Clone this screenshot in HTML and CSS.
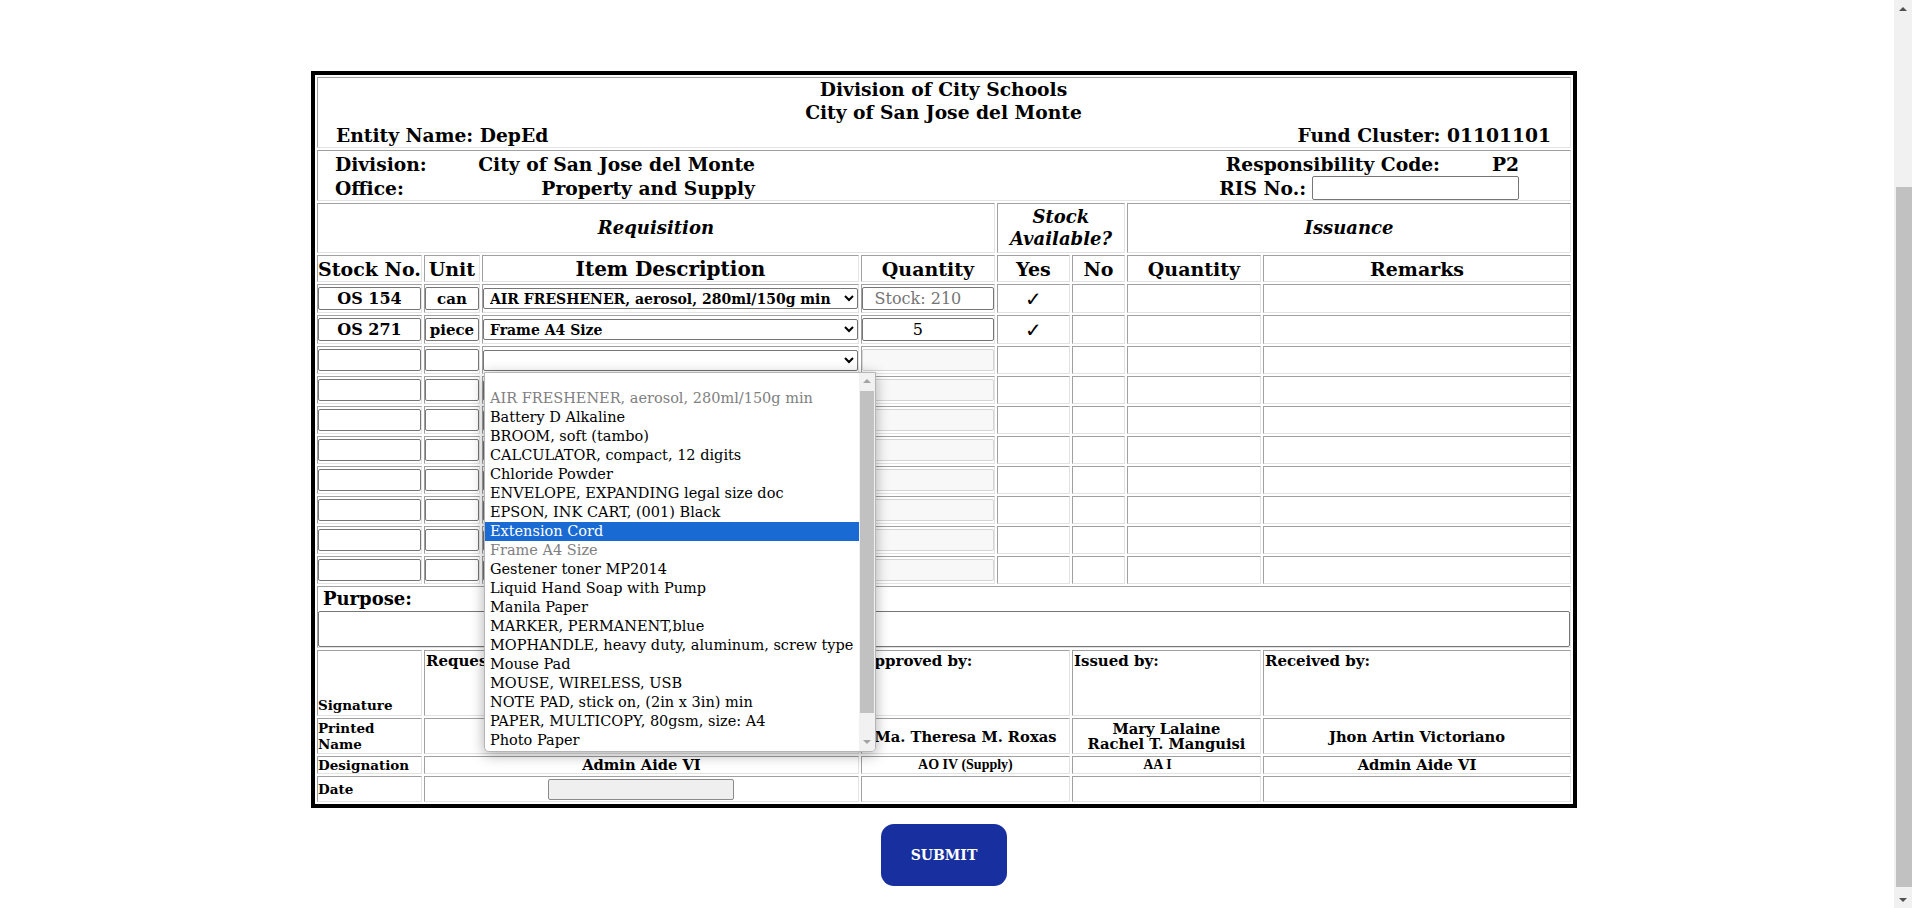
FILE: index.html
```html
<!DOCTYPE html>
<html>
<head>
<meta charset="utf-8">
<title>Requisition and Issue Slip</title>
<link rel="stylesheet" href="styles.css">
</head>
<body>
<div class="page">
  <table class="ris">
    <colgroup>
      <col class="c-stock"><col class="c-unit"><col class="c-item"><col class="c-qty">
      <col class="c-yes"><col class="c-no"><col class="c-iqty"><col class="c-rem">
    </colgroup>
    <tr class="r-a">
      <td colspan="8" class="head-a">
        <div class="title">Division of City Schools</div>
        <div class="title">City of San Jose del Monte</div>
        <div class="entity-line"><span>Entity Name: DepEd</span><span>Fund Cluster: 01101101</span></div>
      </td>
    </tr>
    <tr class="r-b">
      <td colspan="8" class="head-b">
        <div class="left-block">
          <div class="kv"><span class="k">Division:</span><span class="v">City of San Jose del Monte</span></div>
          <div class="kv"><span class="k">Office:</span><span class="v">Property and Supply</span></div>
        </div>
        <div class="right-block">
          <div class="rline">Responsibility Code:<span class="p2">P2</span></div>
          <div class="rline">RIS No.:<input class="ris-no" type="text"></div>
        </div>
      </td>
    </tr>
    <tr class="r-c">
      <td colspan="4" class="sec">Requisition</td>
      <td colspan="2" class="sec">Stock<br>Available?</td>
      <td colspan="2" class="sec">Issuance</td>
    </tr>
    <tr class="r-d">
      <td class="th">Stock No.</td>
      <td class="th">Unit</td>
      <td class="th th-item">Item Description</td>
      <td class="th">Quantity</td>
      <td class="th">Yes</td>
      <td class="th">No</td>
      <td class="th">Quantity</td>
      <td class="th">Remarks</td>
    </tr>
    <tr class="dr tall">
      <td><input class="in-stock" type="text" value="OS 154"></td>
      <td><input class="in-unit" type="text" value="can"></td>
      <td><select class="sel"><option>AIR FRESHENER, aerosol, 280ml/150g min</option></select></td>
      <td><input class="in-qty" type="text" placeholder="Stock: 210"></td>
      <td class="chk">✓</td><td></td><td></td><td></td>
    </tr>
    <tr class="dr tall">
      <td><input class="in-stock" type="text" value="OS 271"></td>
      <td><input class="in-unit" type="text" value="piece"></td>
      <td><select class="sel"><option>Frame A4 Size</option></select></td>
      <td><input class="in-qty" type="text" value="5"></td>
      <td class="chk">✓</td><td></td><td></td><td></td>
    </tr>
    <tr class="dr">
      <td><input class="in-stock" type="text"></td>
      <td><input class="in-unit" type="text"></td>
      <td>
        <div class="dd-anchor">
          <select class="sel"><option></option></select>
          <div class="dd">
            <div class="dd-list">
              <div class="opt blank"></div>
              <div class="opt dis">AIR FRESHENER, aerosol, 280ml/150g min</div>
              <div class="opt">Battery D Alkaline</div>
              <div class="opt">BROOM, soft (tambo)</div>
              <div class="opt">CALCULATOR, compact, 12 digits</div>
              <div class="opt">Chloride Powder</div>
              <div class="opt">ENVELOPE, EXPANDING legal size doc</div>
              <div class="opt">EPSON, INK CART, (001) Black</div>
              <div class="opt hi">Extension Cord</div>
              <div class="opt dis">Frame A4 Size</div>
              <div class="opt">Gestener toner MP2014</div>
              <div class="opt">Liquid Hand Soap with Pump</div>
              <div class="opt">Manila Paper</div>
              <div class="opt">MARKER, PERMANENT,blue</div>
              <div class="opt">MOPHANDLE, heavy duty, aluminum, screw type</div>
              <div class="opt">Mouse Pad</div>
              <div class="opt">MOUSE, WIRELESS, USB</div>
              <div class="opt">NOTE PAD, stick on, (2in x 3in) min</div>
              <div class="opt">PAPER, MULTICOPY, 80gsm, size: A4</div>
              <div class="opt">Photo Paper</div>
            </div>
            <div class="dd-sb">
              <div class="sb-btn"><span class="tri up"></span></div>
              <div class="dd-thumb"></div>
              <div class="sb-fill"></div>
              <div class="sb-btn"><span class="tri down"></span></div>
            </div>
          </div>
        </div>
      </td>
      <td><input class="in-qty" type="text" disabled></td>
      <td></td><td></td><td></td><td></td>
    </tr>
    <tr class="dr">
      <td><input class="in-stock" type="text"></td><td><input class="in-unit" type="text"></td>
      <td><select class="sel"><option></option></select></td><td><input class="in-qty" type="text" disabled></td>
      <td></td><td></td><td></td><td></td>
    </tr>
    <tr class="dr">
      <td><input class="in-stock" type="text"></td><td><input class="in-unit" type="text"></td>
      <td><select class="sel"><option></option></select></td><td><input class="in-qty" type="text" disabled></td>
      <td></td><td></td><td></td><td></td>
    </tr>
    <tr class="dr">
      <td><input class="in-stock" type="text"></td><td><input class="in-unit" type="text"></td>
      <td><select class="sel"><option></option></select></td><td><input class="in-qty" type="text" disabled></td>
      <td></td><td></td><td></td><td></td>
    </tr>
    <tr class="dr">
      <td><input class="in-stock" type="text"></td><td><input class="in-unit" type="text"></td>
      <td><select class="sel"><option></option></select></td><td><input class="in-qty" type="text" disabled></td>
      <td></td><td></td><td></td><td></td>
    </tr>
    <tr class="dr">
      <td><input class="in-stock" type="text"></td><td><input class="in-unit" type="text"></td>
      <td><select class="sel"><option></option></select></td><td><input class="in-qty" type="text" disabled></td>
      <td></td><td></td><td></td><td></td>
    </tr>
    <tr class="dr">
      <td><input class="in-stock" type="text"></td><td><input class="in-unit" type="text"></td>
      <td><select class="sel"><option></option></select></td><td><input class="in-qty" type="text" disabled></td>
      <td></td><td></td><td></td><td></td>
    </tr>
    <tr class="dr">
      <td><input class="in-stock" type="text"></td><td><input class="in-unit" type="text"></td>
      <td><select class="sel"><option></option></select></td><td><input class="in-qty" type="text" disabled></td>
      <td></td><td></td><td></td><td></td>
    </tr>
    <tr class="r-purpose">
      <td colspan="8" class="purpose">
        <div class="purpose-label">Purpose:</div>
        <textarea class="purpose-text"></textarea>
      </td>
    </tr>
    <tr class="r-sig">
      <td class="lbl lbl-bottom">Signature</td>
      <td colspan="2" class="sig">Requested by:</td>
      <td colspan="2" class="sig">Approved by:</td>
      <td colspan="2" class="sig">Issued by:</td>
      <td class="sig">Received by:</td>
    </tr>
    <tr class="r-name">
      <td class="lbl">Printed<br>Name</td>
      <td colspan="2" class="nm"></td>
      <td colspan="2" class="nm">Ma. Theresa M. Roxas</td>
      <td colspan="2" class="nm">Mary Lalaine<br>Rachel T. Manguisi</td>
      <td class="nm">Jhon Artin Victoriano</td>
    </tr>
    <tr class="r-des">
      <td class="lbl">Designation</td>
      <td colspan="2" class="ds">Admin Aide VI</td>
      <td colspan="2" class="ds tnr">AO IV (Supply)</td>
      <td colspan="2" class="ds tnr ds-iss">AA I</td>
      <td class="ds">Admin Aide VI</td>
    </tr>
    <tr class="r-date">
      <td class="lbl">Date</td>
      <td colspan="2" class="dt"><input class="date-in" type="text"></td>
      <td colspan="2"></td>
      <td colspan="2"></td>
      <td></td>
    </tr>
  </table>
  <button class="submit" type="button">SUBMIT</button>
</div>
<div class="page-sb">
  <div class="psb-btn"><span class="tri up"></span></div>
  <div class="psb-thumb"></div>
  <div class="psb-fill"></div>
  <div class="psb-btn"><span class="tri down"></span></div>
</div>
</body>
</html>
```

FILE: styles.css
```css
* { box-sizing: border-box; }

html, body {
  margin: 0;
  padding: 0;
  background: #fff;
  overflow: hidden;
}

body {
  font-family: "DejaVu Serif", serif;
  color: #000;
}

.page {
  width: 1888px;
  display: flex;
  flex-direction: column;
  align-items: center;
  padding-top: 71px;
}

.ris {
  width: 1266px;
  border: 4px solid #000;
  border-collapse: separate;
  border-spacing: 2px;
  table-layout: fixed;
}

.ris td {
  border: 1px solid;
  border-color: #a0a0a0 #e3e3e3 #e3e3e3 #a0a0a0;
  padding: 0;
  vertical-align: middle;
}

col.c-stock { width: 105px; }
col.c-unit { width: 56px; }
col.c-item { width: 377px; }
col.c-qty { width: 134px; }
col.c-yes { width: 73px; }
col.c-no { width: 53px; }
col.c-iqty { width: 134px; }
col.c-rem { width: 308px; }

.r-a { height: 71px; }
.r-b { height: 51px; }
.r-c { height: 50px; }
.r-d { height: 27px; }
.dr { height: 28px; }
.dr.tall { height: 29px; }
.r-purpose { height: 62px; }
.r-sig { height: 66px; }
.r-name { height: 36px; }
.r-des { height: 18px; }
.r-date { height: 26px; }

/* header rows */
.head-a {
  padding: 0 19px 0 18px !important;
  font-size: 18.7px;
  font-weight: bold;
  line-height: 23px;
}
.title { text-align: center; }
.entity-line {
  display: flex;
  justify-content: space-between;
}

.head-b {
  font-size: 18.7px;
  font-weight: bold;
  line-height: 24px;
  padding: 0 51px 0 17px !important;
}
.head-b .left-block { float: left; }
.head-b .right-block { float: right; }

.kv {
  display: grid;
  grid-template-columns: 141px 279px;
}
.kv .v { text-align: right; }

.rline {
  display: flex;
  justify-content: flex-end;
  align-items: center;
  height: 24px;
}
.p2 { margin-left: 52px; }
.ris-no {
  width: 207px;
  height: 24px;
  margin-left: 6px;
  border: 1px solid #767676;
  border-radius: 2px;
  background: #fff;
  padding: 0 4px;
}

.sec {
  text-align: center;
  font-size: 18px;
  font-weight: bold;
  font-style: italic;
  line-height: 22px;
}

.th {
  text-align: center;
  font-size: 19px;
  font-weight: bold;
  line-height: 22px;
}
.th.th-item { font-size: 20px; }

/* data rows */
.dr input, .dr select {
  display: block;
  width: 100%;
  margin: 0;
  font-family: "DejaVu Serif", serif;
  color: #000;
}

.dr input {
  height: 22px;
  border: 1px solid #767676;
  border-radius: 2px;
  background: #fff;
  padding: 0 2px;
  text-align: center;
}
.dr.tall input { height: 23px; }

.in-stock { font-size: 16px; font-weight: bold; }
.in-unit { font-size: 15px; font-weight: bold; padding: 0 !important; }

.in-qty {
  font-size: 16px;
  font-weight: normal;
  padding-right: 22px !important;
}
.in-qty::placeholder { color: #757575; }
.in-qty:disabled {
  background: #f8f8f8;
  border-color: #d4d4d4;
}

.sel {
  height: 21px;
  font-size: 14px;
  font-weight: bold;
  border: 1px solid #767676;
  border-radius: 2px;
  background: #fff;
  padding: 0 0 0 2px;
}

.chk {
  text-align: center;
  font-size: 20px;
}

/* open dropdown */
.dd-anchor { position: relative; }

.dd {
  position: absolute;
  top: calc(100% + 1px);
  left: 1px;
  width: 392px;
  height: 380px;
  display: flex;
  background: #fff;
  border: 1px solid #b5b5b5;
  border-radius: 0 0 5px 5px;
  box-shadow: 0 3px 14px rgba(0, 0, 0, 0.32);
  overflow: hidden;
  z-index: 10;
}

.dd-list {
  flex: 1;
  font-size: 14.5px;
  line-height: 19px;
  white-space: nowrap;
  overflow: hidden;
}

.opt {
  height: 19px;
  padding-left: 5px;
  color: #000;
}
.opt.blank { height: 16px; }
.opt.dis { color: #808080; }
.opt.hi { background: #1a6ad3; color: #fff; }

.dd-sb {
  width: 16px;
  background: #f1f1f1;
  display: flex;
  flex-direction: column;
}
.sb-btn {
  height: 17px;
  display: flex;
  align-items: center;
  justify-content: center;
}
.dd-thumb {
  height: 322px;
  margin: 1px 1px 0 1px;
  background: #c1c1c1;
}
.sb-fill { flex: 1; }

.tri {
  width: 0;
  height: 0;
  border-left: 4px solid transparent;
  border-right: 4px solid transparent;
}
.tri.up { border-bottom: 4px solid #a3a3a3; }
.tri.down { border-top: 4px solid #a3a3a3; }

/* purpose */
.purpose-label {
  font-size: 18px;
  font-weight: bold;
  line-height: 24px;
  padding-left: 5px;
}
.purpose-text {
  display: block;
  width: 100%;
  height: 36px;
  margin: 0;
  border: 1px solid #767676;
  border-radius: 2px;
  resize: none;
}

/* signatures */
.lbl {
  font-size: 13.5px;
  font-weight: bold;
  line-height: 16px;
}
.lbl-bottom {
  vertical-align: bottom !important;
  line-height: 19px;
}
.sig {
  vertical-align: top !important;
  font-size: 15px;
  font-weight: bold;
  line-height: 19px;
  padding: 1px 0 0 1px !important;
}
.nm {
  text-align: center;
  font-size: 14.7px;
  font-weight: bold;
  line-height: 15px;
}
.ds {
  text-align: center;
  font-size: 14.7px;
  font-weight: bold;
  line-height: 16px;
}
.ds.tnr {
  font-family: "Liberation Serif", serif;
  font-size: 14px;
}
.ds-iss { padding-right: 18px !important; }

.dt { text-align: center; }
.date-in {
  display: inline-block;
  vertical-align: middle;
  width: 186px;
  height: 21px;
  border: 1px solid #8a8a8a;
  border-radius: 2px;
  background: #efefef;
}

/* submit */
.submit {
  margin-top: 16px;
  width: 126px;
  height: 62px;
  border: none;
  border-radius: 13px;
  background: #182f9f;
  color: #fff;
  font-family: "DejaVu Serif", serif;
  font-size: 14px;
  font-weight: bold;
}

/* page scrollbar */
.page-sb {
  position: fixed;
  top: 0;
  right: 0;
  width: 18px;
  height: 100%;
  background: #f1f1f1;
  display: flex;
  flex-direction: column;
}
.psb-btn {
  height: 17px;
  display: flex;
  align-items: center;
  justify-content: center;
}
.psb-btn .tri.up { border-bottom-color: #505050; }
.psb-btn .tri.down { border-top-color: #505050; }
.psb-thumb {
  margin-top: 170px;
  margin-left: 2px;
  height: 700px;
  background: #c1c1c1;
}
.psb-fill { flex: 1; }
```
